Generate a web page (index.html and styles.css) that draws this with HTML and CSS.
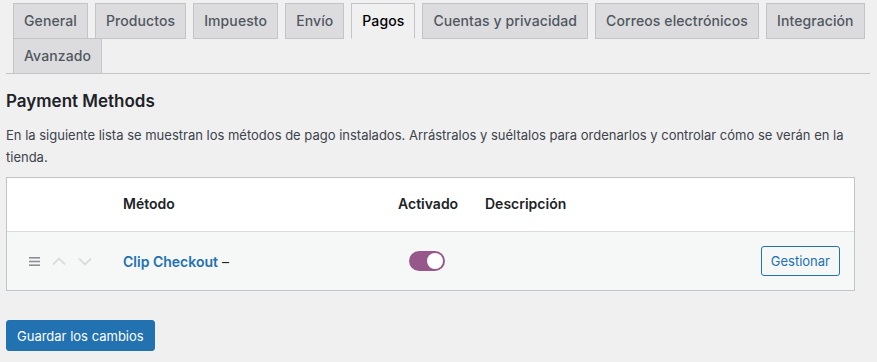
FILE: index.html
```html
<!DOCTYPE html>
<html lang="es">
<head>
  <meta charset="UTF-8" />
  <meta name="viewport" content="width=device-width, initial-scale=1.0"/>
  <title>Ajustes - Pagos</title>
  <link rel="stylesheet" href="styles.css">
</head>
<body>
  <div class="wrap">
    <nav class="nav-tab-wrapper">
      <a class="nav-tab" href="#">General</a>
      <a class="nav-tab" href="#">Productos</a>
      <a class="nav-tab" href="#">Impuesto</a>
      <a class="nav-tab" href="#">Envío</a>
      <a class="nav-tab nav-tab-active" href="#">Pagos</a>
      <a class="nav-tab" href="#">Cuentas y privacidad</a>
      <a class="nav-tab" href="#">Correos electrónicos</a>
      <a class="nav-tab" href="#">Integración</a>
      <a class="nav-tab" href="#">Avanzado</a>
    </nav>

    <h2 class="section-title">Payment Methods</h2>
    <p class="section-desc">En la siguiente lista se muestran los métodos de pago instalados. Arrástralos y suéltalos para ordenarlos y controlar cómo se verán en la tienda.</p>

    <div class="gateways">
      <div class="gw-row gw-head">
        <div class="col-sort"></div>
        <div class="col-name">Método</div>
        <div class="col-status">Activado</div>
        <div class="col-desc">Descripción</div>
        <div class="col-action"></div>
      </div>
      <div class="gw-row gw-item">
        <div class="col-sort">
          <svg class="handle" width="11" height="9" viewBox="0 0 11 9"><rect x="0" y="0" width="11" height="1.6" fill="#8c8f94"/><rect x="0" y="3.7" width="11" height="1.6" fill="#8c8f94"/><rect x="0" y="7.4" width="11" height="1.6" fill="#8c8f94"/></svg>
          <svg class="arrow" width="14" height="9" viewBox="0 0 14 9"><path d="M1 7.5 L7 1.5 L13 7.5" fill="none" stroke="#dcdcde" stroke-width="1.8"/></svg>
          <svg class="arrow" width="14" height="9" viewBox="0 0 14 9"><path d="M1 1.5 L7 7.5 L13 1.5" fill="none" stroke="#dcdcde" stroke-width="1.8"/></svg>
        </div>
        <div class="col-name"><a class="gw-link" href="#">Clip Checkout</a> –</div>
        <div class="col-status"><span class="toggle"><span class="knob"></span></span></div>
        <div class="col-desc"></div>
        <div class="col-action"><button class="btn-outline">Gestionar</button></div>
      </div>
    </div>

    <button class="btn-primary">Guardar los cambios</button>
  </div>
</body>
</html>
```

FILE: styles.css
```css
* {
    margin: 0;
    padding: 0;
    box-sizing: border-box;
}

body {
    background-color: #f0f0f1;
    color: #3c434a;
    font-family: Inter, "Noto Sans", sans-serif;
    font-size: 13px;
}

.wrap {
    padding: 3px 7px 0 6px;
}

/* Tabs */
.nav-tab-wrapper {
    display: flex;
    flex-wrap: wrap;
    border-bottom: 1px solid #c3c4c7;
}

.nav-tab {
    margin-left: 7px;
    margin-bottom: -1px;
    padding: 5px 10px;
    font-size: 14px;
    line-height: 24px;
    font-weight: 500;
    letter-spacing: 0.1px;
    color: #50575e;
    background: #dcdcde;
    border: 1px solid #c3c4c7;
    text-decoration: none;
    white-space: nowrap;
}

.nav-tab-active {
    background: #f0f0f1;
    color: #000;
    border-bottom-color: #f0f0f1;
}

/* Heading */
.section-title {
    font-size: 17px;
    font-weight: 600;
    color: #1d2327;
    margin: 16px 0 0;
    line-height: 22px;
}

.section-desc {
    margin: 12px 0 9px;
    line-height: 22px;
    color: #3c434a;
}

/* Gateways table */
.gateways {
    border: 1px solid #c3c4c7;
    background: #fff;
    width: 849px;
}

.gw-row {
    display: flex;
    align-items: center;
}

.gw-head {
    height: 54px;
    padding-bottom: 2px;
    font-size: 14px;
    font-weight: 600;
    color: #1d2327;
    border-bottom: 1px solid #dcdcde;
}

.gw-item {
    height: 58px;
    background: #f6f7f7;
    font-size: 14px;
    color: #1d2327;
}

.col-sort {
    width: 116px;
    padding-left: 22px;
    display: flex;
    align-items: center;
    gap: 11px;
}

.col-sort .arrow {
    margin-left: 1px;
}

.col-name {
    width: 275px;
}

.col-status {
    width: 87px;
}

.col-desc {
    flex: 1;
}

.col-action {
    padding-right: 14px;
}

.gw-link {
    color: #2271b1;
    font-weight: 600;
    text-decoration: none;
}

.toggle {
    display: flex;
    align-items: center;
    justify-content: flex-end;
    width: 36px;
    height: 20px;
    margin-left: 11px;
    border-radius: 10px;
    background: #96588a;
    padding: 2px;
}

.knob {
    width: 16px;
    height: 16px;
    border-radius: 50%;
    background: #fff;
}

.btn-outline {
    font-family: inherit;
    font-size: 13px;
    color: #2271b1;
    background: #f6f7f7;
    border: 1px solid #2271b1;
    border-radius: 3px;
    padding: 0 9px;
    height: 30px;
    line-height: 28px;
    cursor: pointer;
}

.btn-primary {
    margin-top: 29px;
    font-family: inherit;
    font-size: 13px;
    color: #fff;
    background: #2271b1;
    border: 1px solid #2271b1;
    border-radius: 3px;
    padding: 0 10px;
    height: 31px;
    white-space: nowrap;
    cursor: pointer;
}
```
